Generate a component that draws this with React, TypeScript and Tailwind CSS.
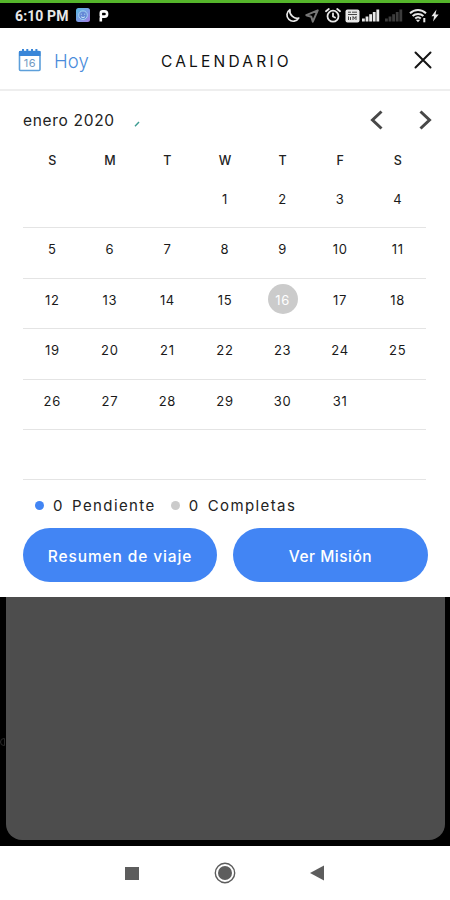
import { useState } from "react";

interface ActionButtonProps {
  label: string;
  className: string;
}

interface LegendItemProps {
  dot: string;
  label: string;
  tracking: string;
}

const weekdays = ["S", "M", "T", "W", "T", "F", "S"];
const firstWeekday = 3;
const daysInMonth = 31;

const weeks = Array.from({ length: 6 }, (_, week) =>
  Array.from({ length: 7 }, (_, col) => {
    const day = week * 7 + col - firstWeekday + 1;
    return day > 0 && day <= daysInMonth ? day : null;
  })
);

function SignalBars({ className }: { className: string }) {
  return (
    <svg width="18" height="13" viewBox="0 0 18 13" className={className} fill="currentColor">
      <rect x="0" y="9.5" width="2.8" height="3" />
      <rect x="3.6" y="7.5" width="2.8" height="5" />
      <rect x="7.2" y="5.2" width="2.8" height="7.3" />
      <rect x="10.8" y="3" width="2.8" height="9.5" />
      <rect x="14.4" y="0.5" width="2.8" height="12" />
    </svg>
  );
}

function StatusBar() {
  return (
    <div className="flex h-7 items-center border-t-3 border-[#55b52b] bg-black pl-[15px] pr-[11px] text-[#e8e8e8]">
      <span className="w-[54px] whitespace-nowrap font-['Roboto',sans-serif] text-[14px] font-bold leading-none tracking-[0.1px]">6:10 PM</span>
      <svg width="14" height="14" viewBox="0 0 14 14" className="ml-[7px] mt-[-2px]">
        <defs>
          <linearGradient id="app" x1="0" y1="0" x2="1" y2="1">
            <stop offset="0" stopColor="#59b9df" />
            <stop offset="0.55" stopColor="#7d9be6" />
            <stop offset="1" stopColor="#a27be0" />
          </linearGradient>
        </defs>
        <rect width="14" height="14" rx="2.5" fill="url(#app)" />
        <circle cx="7" cy="7.2" r="4.3" fill="#6488d6" stroke="#a3d5f2" />
        <path d="M4.8 6.2h.9M8.3 6.2h.9M5 8.6c1 1.2 3 1.2 4 0" fill="none" stroke="#cdeafa" />
      </svg>
      <svg width="11" height="13" viewBox="0 0 11 13" className="ml-[8px] mt-[-1px]" fill="none" stroke="#fff">
        <path d="M2.8 7.4V4.2c0-1 .7-1.8 1.8-1.8h1.9a2.6 2.6 0 0 1 0 5.2H4.4c-1 0-1.6.7-1.6 1.6v3.3" strokeWidth="2.6" />
      </svg>

      <div className="ml-auto flex items-center">
        <svg width="15" height="15" viewBox="0 0 15 15" fill="none" stroke="currentColor" strokeWidth="1.7" strokeLinejoin="round">
          <path d="M4.9 1.6a6.3 6.3 0 1 0 8.8 8.5C9 11.4 4 6.5 4.9 1.6z" />
        </svg>
        <svg width="14" height="14" viewBox="0 0 14 14" className="ml-[5px] text-[#777]" fill="none" stroke="currentColor" strokeWidth="2" strokeLinejoin="round">
          <path d="M12.7 1.3 1.3 6.2l5 1.5 1.5 5z" />
        </svg>
        <svg width="16" height="15" viewBox="0 0 16 15" className="ml-[6px]" fill="none" stroke="currentColor" strokeWidth="1.8" strokeLinecap="round">
          <circle cx="8" cy="8.2" r="5.5" />
          <path d="M8 5.3v3.2l2 1M1 3.2 3.8 1M15 3.2 12.2 1" />
        </svg>
        <svg width="15" height="14" viewBox="0 0 15 14" className="ml-[4px]">
          <rect x="0.5" y="0.5" width="14" height="13" rx="2" fill="currentColor" />
          <path d="M3 3.2h3M7 3.2h5M3 5.5h9M3.5 11V7.5M5.5 8v3M8 11V7.5l1.5 2 1.5-2V11" fill="none" stroke="#333" strokeWidth="0.9" />
        </svg>
        <SignalBars className="ml-[2px]" />
        <SignalBars className="ml-[5px] text-[#3c3c3c]" />
        <svg width="18" height="15" viewBox="0 0 18 15" className="ml-[6px]" fill="none" stroke="currentColor" strokeWidth="2">
          <path d="M1 5.2c4.5-4.3 11.5-4.3 16 0M3.6 8c3-2.8 7.8-2.8 10.8 0M6.2 10.6c1.6-1.5 4-1.5 5.6 0" />
          <path d="M9 14.3 6.8 11.8h4.4z" fill="currentColor" stroke="none" />
          <path d="M15.3 10v4.3" strokeWidth="2" />
        </svg>
        <svg width="8" height="13" viewBox="0 0 8 13" className="ml-[4px]" fill="currentColor">
          <path d="M5.5.5.5 7.2h2.6L2 12.5l5.7-7H4.5z" />
        </svg>
      </div>
    </div>
  );
}

function Header() {
  return (
    <header className="flex h-[63px] items-center border-b-2 border-[#eeeeee] pl-[18px] pr-[18px] pt-1">
      <button className="flex w-[143px] items-center text-[#4a8cdb]">
        <svg width="24" height="24" viewBox="0 0 24 24" className="mt-[-1px]">
          <rect x="1.5" y="3.5" width="20.5" height="19" rx="1" fill="#fff" stroke="#5d9fda" strokeWidth="1.6" />
          <path d="M1 3h21.5v5H1z" fill="#3986d8" />
          <path d="M5 1v3M9.3 1v3M14 1v3M18.4 1v3" stroke="#3986d8" strokeWidth="2" />
          <text x="12" y="18.6" textAnchor="middle" fontSize="11" letterSpacing="0.7" fill="#719ac3" fontFamily="Inter, sans-serif">16</text>
        </svg>
        <span className="ml-3 pt-[2px] text-[18.5px] font-light leading-none tracking-[0.1px]">Hoy</span>
      </button>
      <h1 className="pt-[2px] text-[15.5px] leading-none tracking-[3.2px] text-[#111]">CALENDARIO</h1>
      <button className="ml-auto mt-[-2px] text-[#151515]">
        <svg width="18" height="18" viewBox="0 0 18 18" stroke="currentColor" strokeWidth="2" strokeLinecap="round">
          <path d="m1.5 1.5 15 15M16.5 1.5l-15 15" />
        </svg>
      </button>
    </header>
  );
}

function LegendItem({ dot, label, tracking }: LegendItemProps) {
  return (
    <div className="flex items-center text-[15px] leading-none text-[#222]">
      <span className={`h-[9px] w-[9px] rounded-full ${dot}`} />
      <span className="ml-[9px] w-[19px]">0</span>
      <span className={tracking}>{label}</span>
    </div>
  );
}

function ActionButton({ label, className }: ActionButtonProps) {
  return (
    <button className={`h-[54px] rounded-full bg-[#4285f4] pt-[2px] text-[15.5px] font-medium leading-none text-white ${className}`}>
      {label}
    </button>
  );
}

export default function App() {
  const [selected, setSelected] = useState(16);

  return (
    <div className="flex h-[900px] w-[450px] flex-col overflow-hidden bg-white font-['Inter',sans-serif]">
      <StatusBar />
      <Header />

      <main className="h-[506px] shrink-0 pl-[23px] pr-[22px]">
        <div className="flex h-[58px] items-center">
          <h2 className="w-[92px] whitespace-nowrap pt-[2px] text-[15.5px] leading-none tracking-[0.68px] text-[#222]">enero 2020</h2>
          <svg width="6" height="6" viewBox="0 0 6 6" className="ml-[19px] mt-2">
            <path d="M1 5.3 5 1" stroke="#3c9c92" strokeWidth="1.4" />
          </svg>
          <div className="ml-auto mr-[-4px] flex gap-[36px] text-[#484848]">
            <button>
              <svg width="13" height="20" viewBox="0 0 13 20" fill="none" stroke="currentColor" strokeWidth="3">
                <path d="M11.5 1.5 2.5 10l9 8.5" />
              </svg>
            </button>
            <button>
              <svg width="13" height="20" viewBox="0 0 13 20" fill="none" stroke="currentColor" strokeWidth="3">
                <path d="m1.5 1.5 9 8.5-9 8.5" />
              </svg>
            </button>
          </div>
        </div>

        <div className="mr-[2px] grid h-[29px] grid-cols-7 pt-[4px]">
          {weekdays.map((d, i) => (
            <span key={i} className="pl-px text-center text-[12.5px] font-medium leading-[15px] text-[#222]">{d}</span>
          ))}
        </div>

        {weeks.map((week, i) => (
          <div key={i} className="mr-[2px] grid h-[50.4px] grid-cols-7 border-b border-[#e4e4e4]">
            {week.map((day, col) => (
              <div key={col} className="flex items-start justify-center pl-px pt-[5.5px]">
                {day && (
                  <button
                    onClick={() => setSelected(day)}
                    className={`h-[30px] w-[30px] rounded-full pt-[2px] text-[13px] leading-none tracking-[0.7px] ${
                      day === selected ? "bg-[#cbcbcb] text-white" : "text-[#1a1a1a]"
                    }`}
                  >
                    {day}
                  </button>
                )}
              </div>
            ))}
          </div>
        ))}

        <div className="flex h-[48px] items-center gap-[15px] pl-3 pt-[3px]">
          <LegendItem dot="bg-[#4285f4]" label="Pendiente" tracking="tracking-[1.4px]" />
          <LegendItem dot="bg-[#cbcbcb]" label="Completas" tracking="tracking-[1.4px]" />
        </div>

        <div className="flex gap-4">
          <ActionButton label="Resumen de viaje" className="w-[194px] tracking-[0.88px]" />
          <ActionButton label="Ver Misión" className="w-[195px] tracking-[0.5px]" />
        </div>
      </main>

      <div className="relative h-[249px] shrink-0 bg-black pl-[6px] pr-[5px]">
        <div className="h-[243px] rounded-b-[16px] bg-[#4d4d4d]" />
        <div className="absolute left-0 top-[141px] h-[8px] w-[5px] rounded-l-full border border-[#292929]" />
      </div>

      <nav className="flex flex-1 items-center pl-[125px] text-[#5d5d5d]">
        <span className="h-[13px] w-[14px] bg-current" />
        <svg width="22" height="22" viewBox="0 0 22 22" className="ml-[75px]">
          <circle cx="11" cy="11" r="9.7" fill="none" stroke="currentColor" strokeWidth="1.4" />
          <circle cx="11" cy="11" r="7" fill="currentColor" />
        </svg>
        <svg width="14" height="16" viewBox="0 0 14 16" className="ml-[74px]">
          <path d="M0 8 14 0.5v15z" fill="currentColor" />
        </svg>
      </nav>
    </div>
  );
}
